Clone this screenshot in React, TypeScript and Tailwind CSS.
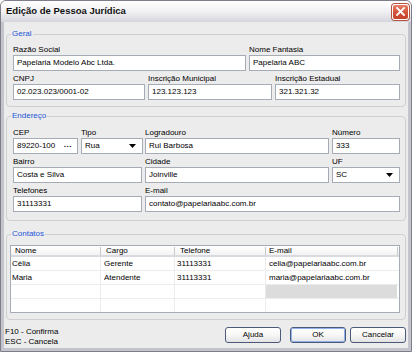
import React from 'react';

const geralRows = [
  [
    { label: 'Razão Social', value: 'Papelaria Modelo Abc Ltda.', w: 'w-[233px]' },
    { label: 'Nome Fantasia', value: 'Papelaria ABC', w: 'w-[151px]' },
  ],
  [
    { label: 'CNPJ', value: '02.023.023/0001-02', w: 'w-[132px]' },
    { label: 'Inscrição Municipal', value: '123.123.123', w: 'w-[124px]' },
    { label: 'Inscrição Estadual', value: '321.321.32', w: 'w-[125px]' },
  ],
];

const contatos = [
  { nome: 'Célia', cargo: 'Gerente', fone: '31113331', email: 'celia@papelariaabc.com.br' },
  { nome: 'Maria', cargo: 'Atendente', fone: '31113331', email: 'maria@papelariaabc.com.br' },
  { nome: '', cargo: '', fone: '', email: '' },
  { nome: '', cargo: '', fone: '', email: '' },
];

function Label({ children }: { children: React.ReactNode }) {
  return <div className="h-[10px] leading-[10px] whitespace-nowrap">{children}</div>;
}

function Field({ label, value, w, kind }: { label: string; value: string; w: string; kind?: 'dots' | 'select' }) {
  return (
    <div className={`flex flex-col ${w}`}>
      <Label>{label}</Label>
      <div className="h-[16px] border border-[#a5acb5] bg-white flex items-center pl-[3px] pr-[5px] leading-none">
        <span className="flex-1 whitespace-nowrap overflow-hidden">{value}</span>
        {kind === 'dots' && <span className="font-bold tracking-[0.5px] text-[8px] -mt-[3px]">...</span>}
        {kind === 'select' && (
          <svg width="7" height="4" viewBox="0 0 7 4" className="mr-[1px]">
            <path d="M0 0h7L3.5 4z" fill="#000" />
          </svg>
        )}
      </div>
    </div>
  );
}

function Group({ title, className, children }: { title: string; className: string; children: React.ReactNode }) {
  return (
    <div className={`relative mx-[2px] border border-[#cfcfcf] rounded-[4px] ${className}`}>
      <span className="absolute -top-[6px] left-[4px] px-[1px] leading-[10px] bg-[#ececec] text-[#1c55d6]">{title}</span>
      {children}
    </div>
  );
}

function Button({ children, primary }: { children: React.ReactNode; primary?: boolean }) {
  return (
    <div className="w-[56px] h-[16px] rounded-[3px] border border-[#4b5a7a] bg-gradient-to-b from-white via-[#f7f7f5] to-[#e3e3e6] flex items-center justify-center">
      <div
        className={`w-full h-full rounded-[2px] flex items-center justify-center leading-none ${
          primary ? 'border border-[#8fb0e8]' : 'border border-transparent'
        }`}
      >
        {children}
      </div>
    </div>
  );
}

export default function App() {
  return (
    <div className="w-[412px] h-[352px] flex flex-col overflow-hidden font-['Liberation_Sans',Arial,sans-serif] text-[8px] text-black bg-[#c4c4cc] border border-[#7d7d8c] rounded-t-[6px]">
      <div className="h-[21px] shrink-0 flex items-center justify-between pl-[5px] pr-[2px] bg-gradient-to-b from-white via-[#f1f1f4] to-[#d5d5dd]">
        <span className="font-bold text-[9.5px] text-[#111]">Edição de Pessoa Jurídica</span>
        <div className="w-[17px] h-[16px] rounded-[3px] border border-white bg-gradient-to-b from-[#e8806a] via-[#d4573d] to-[#c4432b] flex items-center justify-center shadow-[0_0_0_1px_#b5543f]">
          <svg width="9" height="9" viewBox="0 0 9 9">
            <path d="M1 1L8 8M8 1L1 8" stroke="#fff" strokeWidth="1.8" strokeLinecap="square" />
          </svg>
        </div>
      </div>

      <div className="flex-1 flex flex-col mx-[3px] mb-[3px] bg-[#ececec]">
        <Group title="Geral" className="mt-[12px] pt-[10px] pb-[6px] pl-[6px]">
          <div className="flex flex-col gap-[3px]">
            {geralRows.map((row, i) => (
              <div key={i} className="flex gap-[3px]">
                {row.map(f => (
                  <Field key={f.label} {...f} />
                ))}
              </div>
            ))}
          </div>
        </Group>

        <Group title="Endereço" className="mt-[9px] pt-[11px] pb-[8px] pl-[6px]">
          <div className="flex flex-col gap-[3px]">
            <div className="flex">
              <Field label="CEP" value="89220-100" w="w-[65px]" kind="dots" />
              <div className="w-[3px]" />
              <Field label="Tipo" value="Rua" w="w-[62px]" kind="select" />
              <div className="w-[2px]" />
              <Field label="Logradouro" value="Rui Barbosa" w="w-[184px]" />
              <div className="w-[3px]" />
              <Field label="Número" value="333" w="w-[68px]" />
            </div>
            <div className="flex gap-[3px]">
              <Field label="Bairro" value="Costa e Silva" w="w-[129px]" />
              <Field label="Cidade" value="Joinville" w="w-[184px]" />
              <Field label="UF" value="SC" w="w-[68px]" kind="select" />
            </div>
            <div className="flex gap-[3px]">
              <Field label="Telefones" value="31113331" w="w-[129px]" />
              <Field label="E-mail" value="contato@papelariaabc.com.br" w="w-[255px]" />
            </div>
          </div>
        </Group>

        <Group title="Contatos" className="mt-[13px] pt-[10px] pb-[6px] pl-[3px]">
          <div className="w-[390px] border border-[#a5acb5] bg-white">
            <div className="h-[11px] flex items-center border-b-2 border-[#d9d9e0] bg-gradient-to-b from-white to-[#f3f3f3]">
              <div className="w-[89px] pl-[4px]">Nome</div>
              <div className="w-[74px] pl-[5px] border-l border-[#c8c8c8] h-[8px] leading-[8px]">Cargo</div>
              <div className="w-[91px] pl-[5px] border-l border-[#c8c8c8] h-[8px] leading-[8px]">Telefone</div>
              <div className="w-[132px] pl-[3px] border-l border-[#c8c8c8] h-[8px] leading-[8px]">E-mail</div>
              <div className="flex-1 border-l border-[#c8c8c8] h-[8px]" />
            </div>
            {contatos.map((c, i) => (
              <div key={i} className={`flex ${i === 3 ? 'h-[13px]' : 'h-[14px] border-b border-[#ececec]'}`}>
                <div className="w-[89px] pl-[1px] flex items-center">{c.nome}</div>
                <div className="w-[74px] pl-[3px] flex items-center border-l border-[#ececec]">{c.cargo}</div>
                <div className="w-[91px] pl-[2px] flex items-center border-l border-[#ececec]">{c.fone}</div>
                <div className={`w-[132px] pl-[3px] flex items-center border-l border-[#ececec] ${i === 2 ? 'bg-[#dcdcdc]' : ''}`}>
                  {c.email}
                </div>
                <div className="flex-1" />
              </div>
            ))}
          </div>
        </Group>

        <div className="flex-1 flex items-end justify-between pl-[1px] pr-[2px] pb-[1px]">
          <div className="flex flex-col leading-[10px]">
            <span>F10 - Confirma</span>
            <span>ESC - Cancela</span>
          </div>
          <div className="flex mb-[4px]">
            <Button>Ajuda</Button>
            <div className="w-[9px]" />
            <Button primary>OK</Button>
            <div className="w-[4px]" />
            <Button>Cancelar</Button>
          </div>
        </div>
      </div>
    </div>
  );
}
